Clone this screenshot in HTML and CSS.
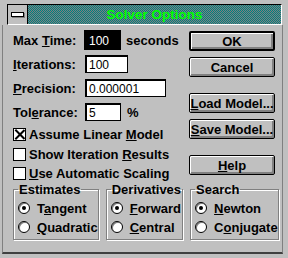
FILE: index.html
```html
<!DOCTYPE html>
<html lang="en">
<head>
  <meta charset="UTF-8" />
  <title>Solver Options</title>
  <link rel="stylesheet" href="styles.css">
</head>
<body>
  <div class="window">
    <div class="titlebar">
      <div class="sysmenu"><span></span></div>
      <div class="caption">Solver Options</div>
    </div>

    <div class="client">
      <div class="top">
        <div class="fields">
          <div class="row">
            <label>Max <u>T</u>ime:</label>
            <input class="field selected" style="width: 35px" value="100" />
            <span class="unit">seconds</span>
          </div>
          <div class="row">
            <label><u>I</u>terations:</label>
            <input class="field" style="width: 43px" value="100" />
          </div>
          <div class="row">
            <label><u>P</u>recision:</label>
            <input class="field" style="width: 81px" value="0.000001" />
          </div>
          <div class="row">
            <label>Tol<u>e</u>rance:</label>
            <input class="field" style="width: 36px" value="5" />
            <span class="unit">%</span>
          </div>

          <div class="checks">
            <div class="check"><span class="box checked"></span><span>Assume Linear <u>M</u>odel</span></div>
            <div class="check"><span class="box"></span><span>Show Iteration <u>R</u>esults</span></div>
            <div class="check"><span class="box"></span><span><u>U</u>se Automatic Scaling</span></div>
          </div>
        </div>

        <div class="buttons">
          <button class="btn default">OK</button>
          <button class="btn">Cancel</button>
          <button class="btn gap"><u>L</u>oad Model...</button>
          <button class="btn"><u>S</u>ave Model...</button>
          <button class="btn gap"><u>H</u>elp</button>
        </div>
      </div>

      <div class="groups">
        <fieldset class="group g-est">
          <legend>Estimates</legend>
          <div class="radio"><span class="dot on"></span><span>T<u>a</u>ngent</span></div>
          <div class="radio"><span class="dot"></span><span><u>Q</u>uadratic</span></div>
        </fieldset>
        <fieldset class="group g-der">
          <legend>Derivatives</legend>
          <div class="radio"><span class="dot on"></span><span><u>F</u>orward</span></div>
          <div class="radio"><span class="dot"></span><span><u>C</u>entral</span></div>
        </fieldset>
        <fieldset class="group g-sea">
          <legend>Search</legend>
          <div class="radio"><span class="dot on"></span><span><u>N</u>ewton</span></div>
          <div class="radio"><span class="dot"></span><span>C<u>o</u>njugate</span></div>
        </fieldset>
      </div>
    </div>
  </div>
</body>
</html>
```

FILE: styles.css
```css
:root {
  --gray: #c0c0c0;
  --dark: #808080;
  --teal: #008080;
}

body {
  margin: 0;
  background: var(--gray);
  font-family: "Liberation Sans", Arial, sans-serif;
  font-size: 13px;
  font-weight: bold;
  color: #000;
}

.window {
  width: 288px;
  height: 258px;
  box-sizing: border-box;
  padding: 4px 6px 0 7px;
}

.titlebar {
  display: flex;
  height: 21px;
  border-top: 1px solid #000;
  border-left: 1px solid #000;
  border-right: 1px solid #fff;
  border-bottom: 1px solid #fff;
  box-sizing: border-box;
}

.sysmenu {
  width: 19px;
  background: var(--gray);
  border-right: 1px solid #000;
  display: flex;
  align-items: center;
  justify-content: center;
}

.sysmenu span {
  width: 11px;
  height: 3px;
  background: #fff;
  border: 1px solid #000;
  box-shadow: 1px 1px 0 var(--dark);
}

.caption {
  flex: 1;
  background-color: var(--teal);
  background-image: repeating-conic-gradient(var(--teal) 0 25%, var(--dark) 0 50%);
  background-size: 2px 2px;
  color: #00ff00;
  font-size: 13.5px;
  text-align: center;
  line-height: 19px;
}

.client {
  margin: 0 -1px 0 -5px;
  padding: 3px 0 0 10px;
  height: 229px;
  box-sizing: border-box;
  border-left: 1px solid var(--dark);
  border-right: 1px solid var(--dark);
  border-bottom: 2px solid #404040;
}

.top {
  display: flex;
}

.fields {
  width: 176px;
}

.row {
  display: flex;
  align-items: center;
  height: 24px;
}

.row label {
  width: 72px;
}

.field {
  height: 18px;
  box-sizing: border-box;
  border: 1px solid #000;
  border-top-width: 2px;
  border-left-width: 2px;
  padding: 0 2px;
  font-family: "Liberation Sans", Arial, sans-serif;
  font-size: 12px;
  font-weight: normal;
  background: #fff;
  color: #000;
}

.field.selected {
  background: #000;
  color: #fff;
  outline: 1px solid #000;
}

.unit {
  margin-left: 6px;
}

.checks {
  margin-top: 1px;
}

.check {
  display: flex;
  align-items: center;
  height: 19.5px;
}

.box {
  width: 11px;
  height: 11px;
  border: 1px solid #000;
  background: #fff;
  margin-right: 3px;
  position: relative;
}

.box.checked::before,
.box.checked::after {
  content: "";
  position: absolute;
  left: 5px;
  top: -1px;
  width: 1.5px;
  height: 13px;
  background: #000;
  transform: rotate(45deg);
}

.box.checked::after {
  transform: rotate(-45deg);
}

.buttons {
  display: flex;
  flex-direction: column;
  gap: 6px;
  margin-top: 3px;
}

.btn {
  width: 86px;
  height: 20px;
  box-sizing: border-box;
  background: var(--gray);
  border: 1px solid #000;
  border-radius: 2px;
  box-shadow: inset 1px 1px 0 #fff, inset -2px -2px 0 var(--dark);
  font: bold 13px "Liberation Sans", Arial, sans-serif;
  color: #000;
  padding: 0;
}

.btn.default {
  border-width: 2px;
}

.btn.gap {
  margin-top: 10px;
}

.groups {
  display: flex;
  gap: 7px;
}

.group {
  margin: 0;
  padding: 3px 0 0 4px;
  height: 56px;
  box-sizing: border-box;
  border: 1px solid var(--dark);
  box-shadow: 1px 1px 0 #fff, inset 1px 1px 0 #fff;
}

.group legend {
  padding: 0 1px;
  margin-left: 0;
  line-height: 12px;
}

.g-est { width: 84px; }
.g-der { width: 77px; }
.g-sea { width: 86px; }

.radio {
  display: flex;
  align-items: center;
  height: 19px;
  white-space: nowrap;
}

.dot {
  width: 10px;
  height: 10px;
  border-radius: 50%;
  background: #fff;
  border: 1px solid #000;
  box-shadow: inset 1px 1px 0 var(--dark);
  margin-right: 7px;
  position: relative;
}

.dot.on::after {
  content: "";
  position: absolute;
  left: 3px;
  top: 3px;
  width: 4px;
  height: 4px;
  border-radius: 50%;
  background: #000;
}
```
